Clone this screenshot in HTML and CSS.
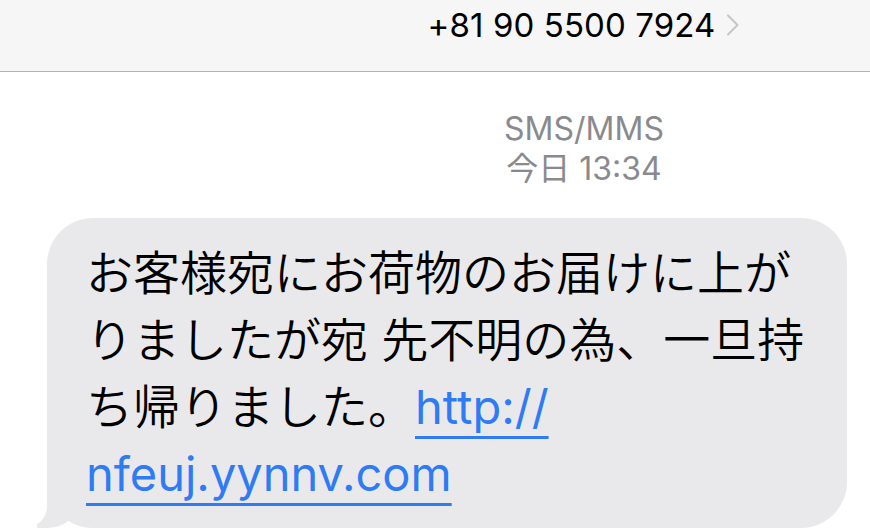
FILE: index.html
```html
<!DOCTYPE html>
<html lang="ja">
<head>
<meta charset="utf-8">
<title>Messages</title>
<link rel="stylesheet" href="styles.css">
</head>
<body>
<div class="screen">
  <header class="nav">
    <div class="nav-title">
      <span class="phone">+81 90 5500 7924</span>
      <svg class="chev" width="14" height="22" viewBox="0 0 14 22" aria-hidden="true"><path d="M2 1.5 L11.5 11 L2 20.5" fill="none" stroke="#c5c5c8" stroke-width="2" stroke-linecap="round" stroke-linejoin="round"/></svg>
    </div>
  </header>
  <div class="meta">
    <div class="meta-line">SMS/MMS</div>
    <div class="meta-line">今日 13:34</div>
  </div>
  <div class="thread">
    <div class="bubble">
      <p class="msg">お客様宛にお荷物のお届けに上が<br>りましたが宛 先不明の為、一旦持<br>ち帰りました。<a class="link" href="#">http://<br>nfeuj.yynnv.com</a></p>
    </div>
  </div>
</div>
</body>
</html>
```

FILE: styles.css
```css
html, body {
  margin: 0;
  padding: 0;
  background: #ffffff;
  overflow: hidden;
}

.screen {
  width: 870px;
  height: 530px;
  overflow: hidden;
  font-family: "Inter", "Noto Sans CJK JP", sans-serif;
}

.nav {
  height: 72px;
  box-sizing: border-box;
  background: #f6f6f6;
  border-bottom: 1px solid #b3b3b3;
  display: flex;
  justify-content: center;
  align-items: flex-start;
  padding-left: 298px;
  padding-top: 5px;
}

.nav-title {
  display: flex;
  align-items: center;
  gap: 11px;
  height: 40px;
}

.phone {
  font-family: "Inter", sans-serif;
  font-size: 33px;
  line-height: 40px;
  color: #000;
  letter-spacing: 0.1px;
}

.chev {
  display: block;
}

.meta {
  margin-top: 37px;
  padding-left: 298px;
  display: flex;
  flex-direction: column;
  align-items: center;
  color: #8a8a8e;
  font-size: 32px;
  line-height: 40px;
}

.meta-line {
  font-family: "Inter", "Noto Sans CJK JP", sans-serif;
}

.thread {
  margin-top: 29px;
  padding-left: 47px;
}

.bubble {
  position: relative;
  width: 800px;
  box-sizing: border-box;
  background: #e9e9eb;
  border-radius: 46px;
  padding: 21px 0 21px 39px;
}

.bubble::before {
  content: "";
  position: absolute;
  left: -10px;
  bottom: 0;
  width: 40px;
  height: 60px;
  background: #e9e9eb;
  border-bottom-right-radius: 30px 24px;
}

.bubble::after {
  content: "";
  position: absolute;
  left: -40px;
  bottom: 0;
  width: 40px;
  height: 60px;
  background: #ffffff;
  border-bottom-right-radius: 22px;
}

.msg {
  position: relative;
  z-index: 1;
  margin: 0;
  font-family: "Inter", "Noto Sans CJK JP", sans-serif;
  font-size: 47px;
  font-weight: 350;
  line-height: 67px;
  color: #000;
  white-space: nowrap;
}

.link {
  color: #2f7bf3;
  font-weight: 400;
  text-decoration: underline;
  text-decoration-thickness: 3px;
  text-underline-offset: 12px;
}
```
